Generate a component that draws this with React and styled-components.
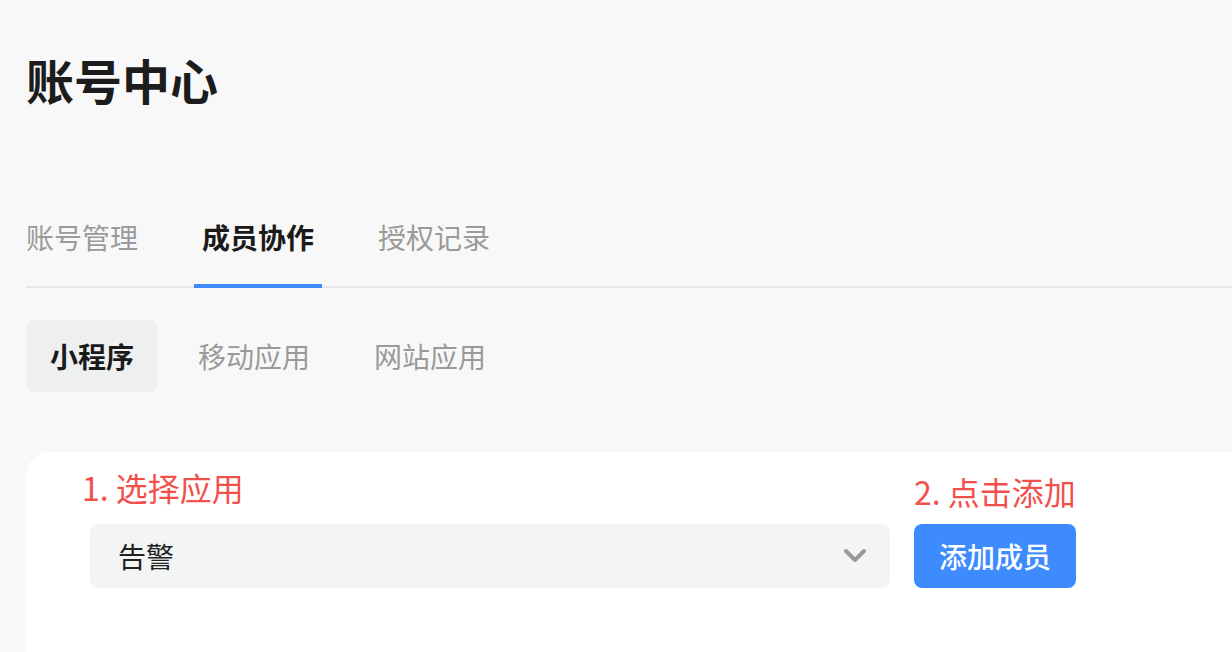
import React, { useState } from "react";
import styled, { createGlobalStyle } from "styled-components";

const Global = createGlobalStyle`
  html, body { margin: 0; padding: 0; background: #f8f8f8; overflow: hidden; }
  body { font-family: "Noto Sans CJK SC", "Noto Sans", sans-serif; }
  * { box-sizing: border-box; }
`;

const Page = styled.div`
  padding: 47px 0 0 26px;
  height: 652px;
  display: flex;
  flex-direction: column;
`;

const Title = styled.h1`
  margin: 0;
  font-size: 48px;
  line-height: 64px;
  font-weight: 700;
  color: #1c1c1c;
`;

const TabBar = styled.div`
  margin-top: 106px;
  display: flex;
  gap: 48px;
  border-bottom: 2px solid #e6e6e6;
`;

const Tab = styled.div`
  margin-left: ${(p) => (p.$first ? "-8px" : "0")};
  padding: 0 8px 27px;
  font-size: 28px;
  line-height: 40px;
  font-weight: ${(p) => (p.$active ? 700 : 400)};
  color: ${(p) => (p.$active ? "#1a1a1a" : "#9a9a9a")};
  border-bottom: 4px solid ${(p) => (p.$active ? "#3d8bff" : "transparent")};
  margin-bottom: -2px;
`;

const SubTabs = styled.div`
  margin-top: 32px;
  display: flex;
  gap: 16px;
`;

const Pill = styled.div`
  padding: 16px 24px;
  font-size: 28px;
  line-height: 40px;
  border-radius: 8px;
  font-weight: ${(p) => (p.$active ? 700 : 400)};
  color: ${(p) => (p.$active ? "#1a1a1a" : "#9a9a9a")};
  background: ${(p) => (p.$active ? "#eef0f0" : "transparent")};
`;

const Card = styled.div`
  margin-top: 60px;
  flex: 1;
  background: #ffffff;
  border-top-left-radius: 24px;
  padding: 13px 0 0 64px;
  display: flex;
  gap: 24px;
  align-items: flex-start;
`;

const Field = styled.div`
  display: flex;
  flex-direction: column;
`;

const Label = styled.div`
  margin-left: ${(p) => p.$indent || 0}px;
  padding-top: ${(p) => p.$offset || 0}px;
  margin-bottom: ${(p) => 15 - (p.$offset || 0)}px;
  font-size: 32px;
  line-height: 44px;
  color: #f2504b;
`;

const Select = styled.div`
  width: 800px;
  height: 64px;
  border-radius: 8px;
  background: #f3f4f4;
  display: flex;
  align-items: center;
  justify-content: space-between;
  padding: 0 23px 0 28px;
  font-size: 28px;
  color: #222;
`;

const Button = styled.button`
  height: 64px;
  padding: 0 23px;
  border: none;
  border-radius: 8px;
  background: #3e8bff;
  color: #fff;
  font-family: inherit;
  font-size: 28px;
  font-weight: 500;
  cursor: pointer;
`;

const Chevron = () => (
  <svg width="24" height="16" viewBox="0 0 24 16">
    <path d="M3 3 L12 12 L21 3" fill="none" stroke="#9a9a9a" strokeWidth="4" strokeLinecap="round" strokeLinejoin="round" />
  </svg>
);

export default function App() {
  const [tab] = useState(1);
  const [sub] = useState(0);
  const tabs = ["账号管理", "成员协作", "授权记录"];
  const subs = ["小程序", "移动应用", "网站应用"];
  return (
    <>
      <Global />
      <Page>
        <Title>账号中心</Title>
        <TabBar>
          {tabs.map((t, i) => (
            <Tab key={t} $first={i === 0} $active={i === tab}>{t}</Tab>
          ))}
        </TabBar>
        <SubTabs>
          {subs.map((s, i) => (
            <Pill key={s} $active={i === sub}>{s}</Pill>
          ))}
        </SubTabs>
        <Card>
          <Field>
            <Label $indent={-8}>1. 选择应用</Label>
            <Select>
              <span>告警</span>
              <Chevron />
            </Select>
          </Field>
          <Field>
            <Label $offset={4}>2. 点击添加</Label>
            <Button>添加成员</Button>
          </Field>
        </Card>
      </Page>
    </>
  );
}
